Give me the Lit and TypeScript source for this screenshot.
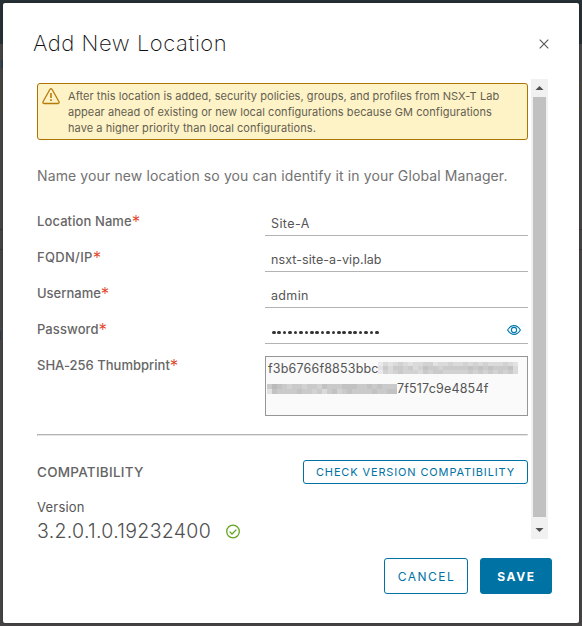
import { LitElement, html, svg, css } from "lit";
import { customElement } from "lit/decorators.js";

/* Shade maps for the redacted thumbprint: 0 is lightest, 9 is darkest. */
const MASK_TOP = [
  "1323432334423343343434333432",
  "2535545346554555556565655563",
  "1434544435455444445454545453",
];
const MASK_BOTTOM = ["57654554554655566655656555", "26555565545356456555565566"];

@customElement("pixel-mask")
class PixelMask extends LitElement {
  static properties = {
    map: { attribute: false },
    cellHeight: { type: Number },
  };
  declare map: string[];
  declare cellHeight: number;

  static styles = css`
    :host { display: inline-block; }
    svg { display: block; }
  `;

  render() {
    const cw = 5;
    const ch = this.cellHeight;
    const w = this.map[0].length * cw;
    const h = this.map.length * ch;
    return html`<svg width=${w} height=${h} viewBox="0 0 ${w} ${h}" shape-rendering="crispEdges">
      ${this.map.map((row, y) =>
        [...row].map((c, x) => {
          const v = 242 - Number(c) * 8;
          return svg`<rect x=${x * cw} y=${y * ch} width=${cw} height=${ch} fill="rgb(${v},${v},${v})"></rect>`;
        })
      )}
    </svg>`;
  }
}

@customElement("app-root")
class AppRoot extends LitElement {
  static styles = css`
    * { box-sizing: border-box; }
    :host {
      display: block;
      height: 626px;
      padding: 3px;
      font-family: Inter, "Open Sans", sans-serif;
      color: #565656;
      background:
        linear-gradient(#273d4c, #273d4c) 1px 60px / 2px 8px no-repeat,
        linear-gradient(#4f4836, #4f4836) 0 84px / 100% 1px no-repeat,
        linear-gradient(#4f4836, #4f4836) 0 109px / 100% 1px no-repeat,
        linear-gradient(#484540, #484540) 0 85px / 100% 24px no-repeat,
        linear-gradient(#363636, #363636) 0 229px / 100% 1px no-repeat,
        linear-gradient(#363636, #363636) 0 249px / 100% 1px no-repeat,
        linear-gradient(#2d3a4a, #2d3a4a) 0 331px / 1px 9px no-repeat,
        linear-gradient(#263035 44px, #464444 44px);
    }
    .dialog {
      height: 620px;
      background: #fff;
      border-radius: 2px;
      box-shadow: 0 0 2px 1px rgba(0, 0, 0, 0.12);
      display: flex;
      flex-direction: column;
      padding: 24px 27px 29px 30px;
    }
    header {
      display: flex;
      justify-content: space-between;
      height: 52px;
    }
    h1 {
      margin: 0;
      font-size: 22px;
      line-height: 32px;
      font-weight: 250;
      letter-spacing: 0.54px;
      color: #111;
    }
    .close { display: block; margin: 12px 3px 0 0; }
    .body {
      height: 460px;
      display: flex;
      padding: 0 4px;
      justify-content: space-between;
    }
    .content { width: 491px; padding-top: 4px; }
    .alert {
      height: 57px;
      border: 1px solid #ad7300;
      border-radius: 3px;
      background: #fef2c7;
      display: flex;
      padding: 4px 0 0 4px;
      font-size: 11px;
      line-height: 16px;
      letter-spacing: 0.055px;
      color: #645f50;
      white-space: nowrap;
    }
    .alert svg { display: block; flex: none; margin-right: 8px; }
    .intro {
      margin: 24px 0 12px;
      font-size: 14px;
      line-height: 24px;
      letter-spacing: 0.115px;
      color: #727272;
      white-space: nowrap;
    }
    .row { display: flex; height: 36px; }
    .row.tall { height: 72px; }
    .label {
      width: 228px;
      padding-top: 11px;
      font-size: 13px;
      line-height: 20px;
      font-weight: 450;
      color: #666;
    }
    .star {
      display: inline-block;
      font-size: 17px;
      line-height: 10px;
      font-weight: 350;
      color: #e0401f;
      vertical-align: -2px;
    }
    .field {
      width: 263px;
      border-bottom: 1px solid #b3b3b3;
      padding: 14px 6px 0;
      display: flex;
      justify-content: space-between;
      font-size: 12.5px;
      line-height: 20px;
      color: #555;
    }
    .dots { display: flex; gap: 1.83px; padding: 8.6px 0 0 1px; }
    .dots i { width: 3.6px; height: 3.6px; border-radius: 50%; background: #333; }
    .eye { display: block; margin: 3px 1px 0 0; }
    .area {
      width: 263px;
      height: 60px;
      margin-top: 12px;
      border: 1px solid #969696;
      background: #fafafa;
      padding: 2px 2px 0;
      font-size: 12.5px;
      line-height: 20px;
      letter-spacing: 0.18px;
      color: #555;
    }
    .line { display: flex; height: 20px; white-space: nowrap; }
    .mask-a { margin: 3px 0 0 -1px; }
    .mask-b { margin: 5px 0 0 -1px; }
    hr {
      height: 2px;
      margin: 18px 0 24px;
      border: 1px solid;
      border-color: #b4b4b4 #eee #e4e4e4 #b4b4b4;
    }
    .compat {
      display: flex;
      justify-content: space-between;
      align-items: center;
      height: 24px;
      font-size: 13.5px;
      line-height: 24px;
      font-weight: 450;
      letter-spacing: 0.25px;
      color: #646464;
    }
    button {
      font-family: inherit;
      margin: 0;
      padding: 0;
      border: 1px solid #0072a3;
      border-radius: 3px;
      background: #fff;
      color: #0072a3;
      white-space: nowrap;
    }
    .check {
      width: 225px;
      height: 24px;
      font-size: 11px;
      line-height: 22px;
      font-weight: 400;
      letter-spacing: 0.86px;
    }
    .version-label {
      margin-top: 13px;
      font-size: 13px;
      line-height: 20px;
      letter-spacing: 0.2px;
      font-weight: 400;
    }
    .version {
      display: flex;
      align-items: center;
      margin-top: 2px;
      font-size: 19.5px;
      line-height: 24px;
      font-weight: 300;
      letter-spacing: 0.306px;
      gap: 14px;
      white-space: nowrap;
      color: #505050;
    }
    .scrollbar {
      width: 17px;
      height: 460px;
      background: #f1f1f1;
      display: flex;
      flex-direction: column;
      align-items: center;
    }
    .scrollbar svg { display: block; }
    .thumb { width: 13px; height: 420px; background: #c1c1c1; }
    footer {
      display: flex;
      justify-content: flex-end;
      gap: 12px;
      margin-top: 19px;
    }
    footer button { height: 36px; font-size: 12px; line-height: 35px; padding-left: 1px; }
    .cancel { width: 84px; font-weight: 400; letter-spacing: 1.5px; }
    .save {
      width: 72px;
      background: #0072a3;
      color: #fff;
      font-weight: 650;
      letter-spacing: 1.6px;
    }
  `;

  private label(text: string, spacing: number) {
    return html`<div class="label"><span style="letter-spacing:${spacing}px">${text}</span><span class="star">*</span></div>`;
  }

  private textRow(label: string, ls: number, value: string, vs: number) {
    return html`<div class="row">
      ${this.label(label, ls)}
      <div class="field"><span style="letter-spacing:${vs}px">${value}</span></div>
    </div>`;
  }

  render() {
    return html`
      <div class="dialog">
        <header>
          <h1>Add New Location</h1>
          <svg class="close" width="10" height="10" viewBox="0 0 10 10" fill="none" stroke="#555" stroke-width="1.1">
            <path d="M.7.7l8.6 8.6M9.3.7L.7 9.3" />
          </svg>
        </header>
        <div class="body">
          <div class="content">
            <div class="alert">
              <svg width="18" height="17" viewBox="0 0 18 17" fill="none" stroke="#b57b08" stroke-width="1.3" stroke-linejoin="round">
                <path d="M8 1.3Q9 .1 10 1.3L17 13.7Q17.5 15.3 16 15.5H2Q.5 15.3 1 13.7Z" />
                <path d="M9 5v5M9 11.3v1.7" stroke-width="1.6" />
              </svg>
              <div>
                After this location is added, security policies, groups, and profiles from NSX-T Lab<br />
                appear ahead of existing or new local configurations because GM configurations<br />
                have a higher priority than local configurations.
              </div>
            </div>
            <div class="intro">Name your new location so you can identify it in your Global Manager.</div>
            ${this.textRow("Location Name", 0.1, "Site-A", 0.4)}
            ${this.textRow("FQDN/IP", 0.3, "nsxt-site-a-vip.lab", 0.08)}
            ${this.textRow("Username", 0, "admin", 0.35)}
            <div class="row">
              ${this.label("Password", 0.08)}
              <div class="field">
                <div class="dots">${Array.from({ length: 20 }, () => html`<i></i>`)}</div>
                <svg class="eye" width="14" height="10" viewBox="0 0 14 10" fill="none" stroke="#0079ad" stroke-width="1.1">
                  <path d="M.6 5Q3.2.6 7 .6T13.4 5Q10.8 9.4 7 9.4T.6 5Z" />
                  <circle cx="7" cy="5" r="2.6" />
                </svg>
              </div>
            </div>
            <div class="row tall">
              ${this.label("SHA-256 Thumbprint", 0.01)}
              <div class="area">
                <div class="line">
                  <span>f3b6766f8853bbc</span>
                  <pixel-mask class="mask-a" .map=${MASK_TOP} .cellHeight=${4}></pixel-mask>
                </div>
                <div class="line">
                  <pixel-mask class="mask-b" .map=${MASK_BOTTOM} .cellHeight=${5}></pixel-mask>
                  <span>7f517c9e4854f</span>
                </div>
              </div>
            </div>
            <hr />
            <div class="compat">
              <span>COMPATIBILITY</span>
              <button class="check">CHECK VERSION COMPATIBILITY</button>
            </div>
            <div class="version-label">Version</div>
            <div class="version">
              <span>3.2.0.1.0.19232400</span>
              <svg width="16" height="16" viewBox="0 0 16 16" fill="none" stroke="#62a420" stroke-width="1.3">
                <circle cx="8" cy="8.5" r="6.3" />
                <path d="M4.6 8.6l2.4 2.4L11.4 6.6" />
              </svg>
            </div>
          </div>
          <div class="scrollbar">
            <svg width="17" height="18" viewBox="0 0 17 18"><path d="M4.5 11L8.5 7L12.5 11Z" fill="#505050" /></svg>
            <div class="thumb"></div>
            <svg width="17" height="22" viewBox="0 0 17 22"><path d="M4.5 11L8.5 15L12.5 11Z" fill="#505050" /></svg>
          </div>
        </div>
        <footer>
          <button class="cancel">CANCEL</button>
          <button class="save">SAVE</button>
        </footer>
      </div>
    `;
  }
}
